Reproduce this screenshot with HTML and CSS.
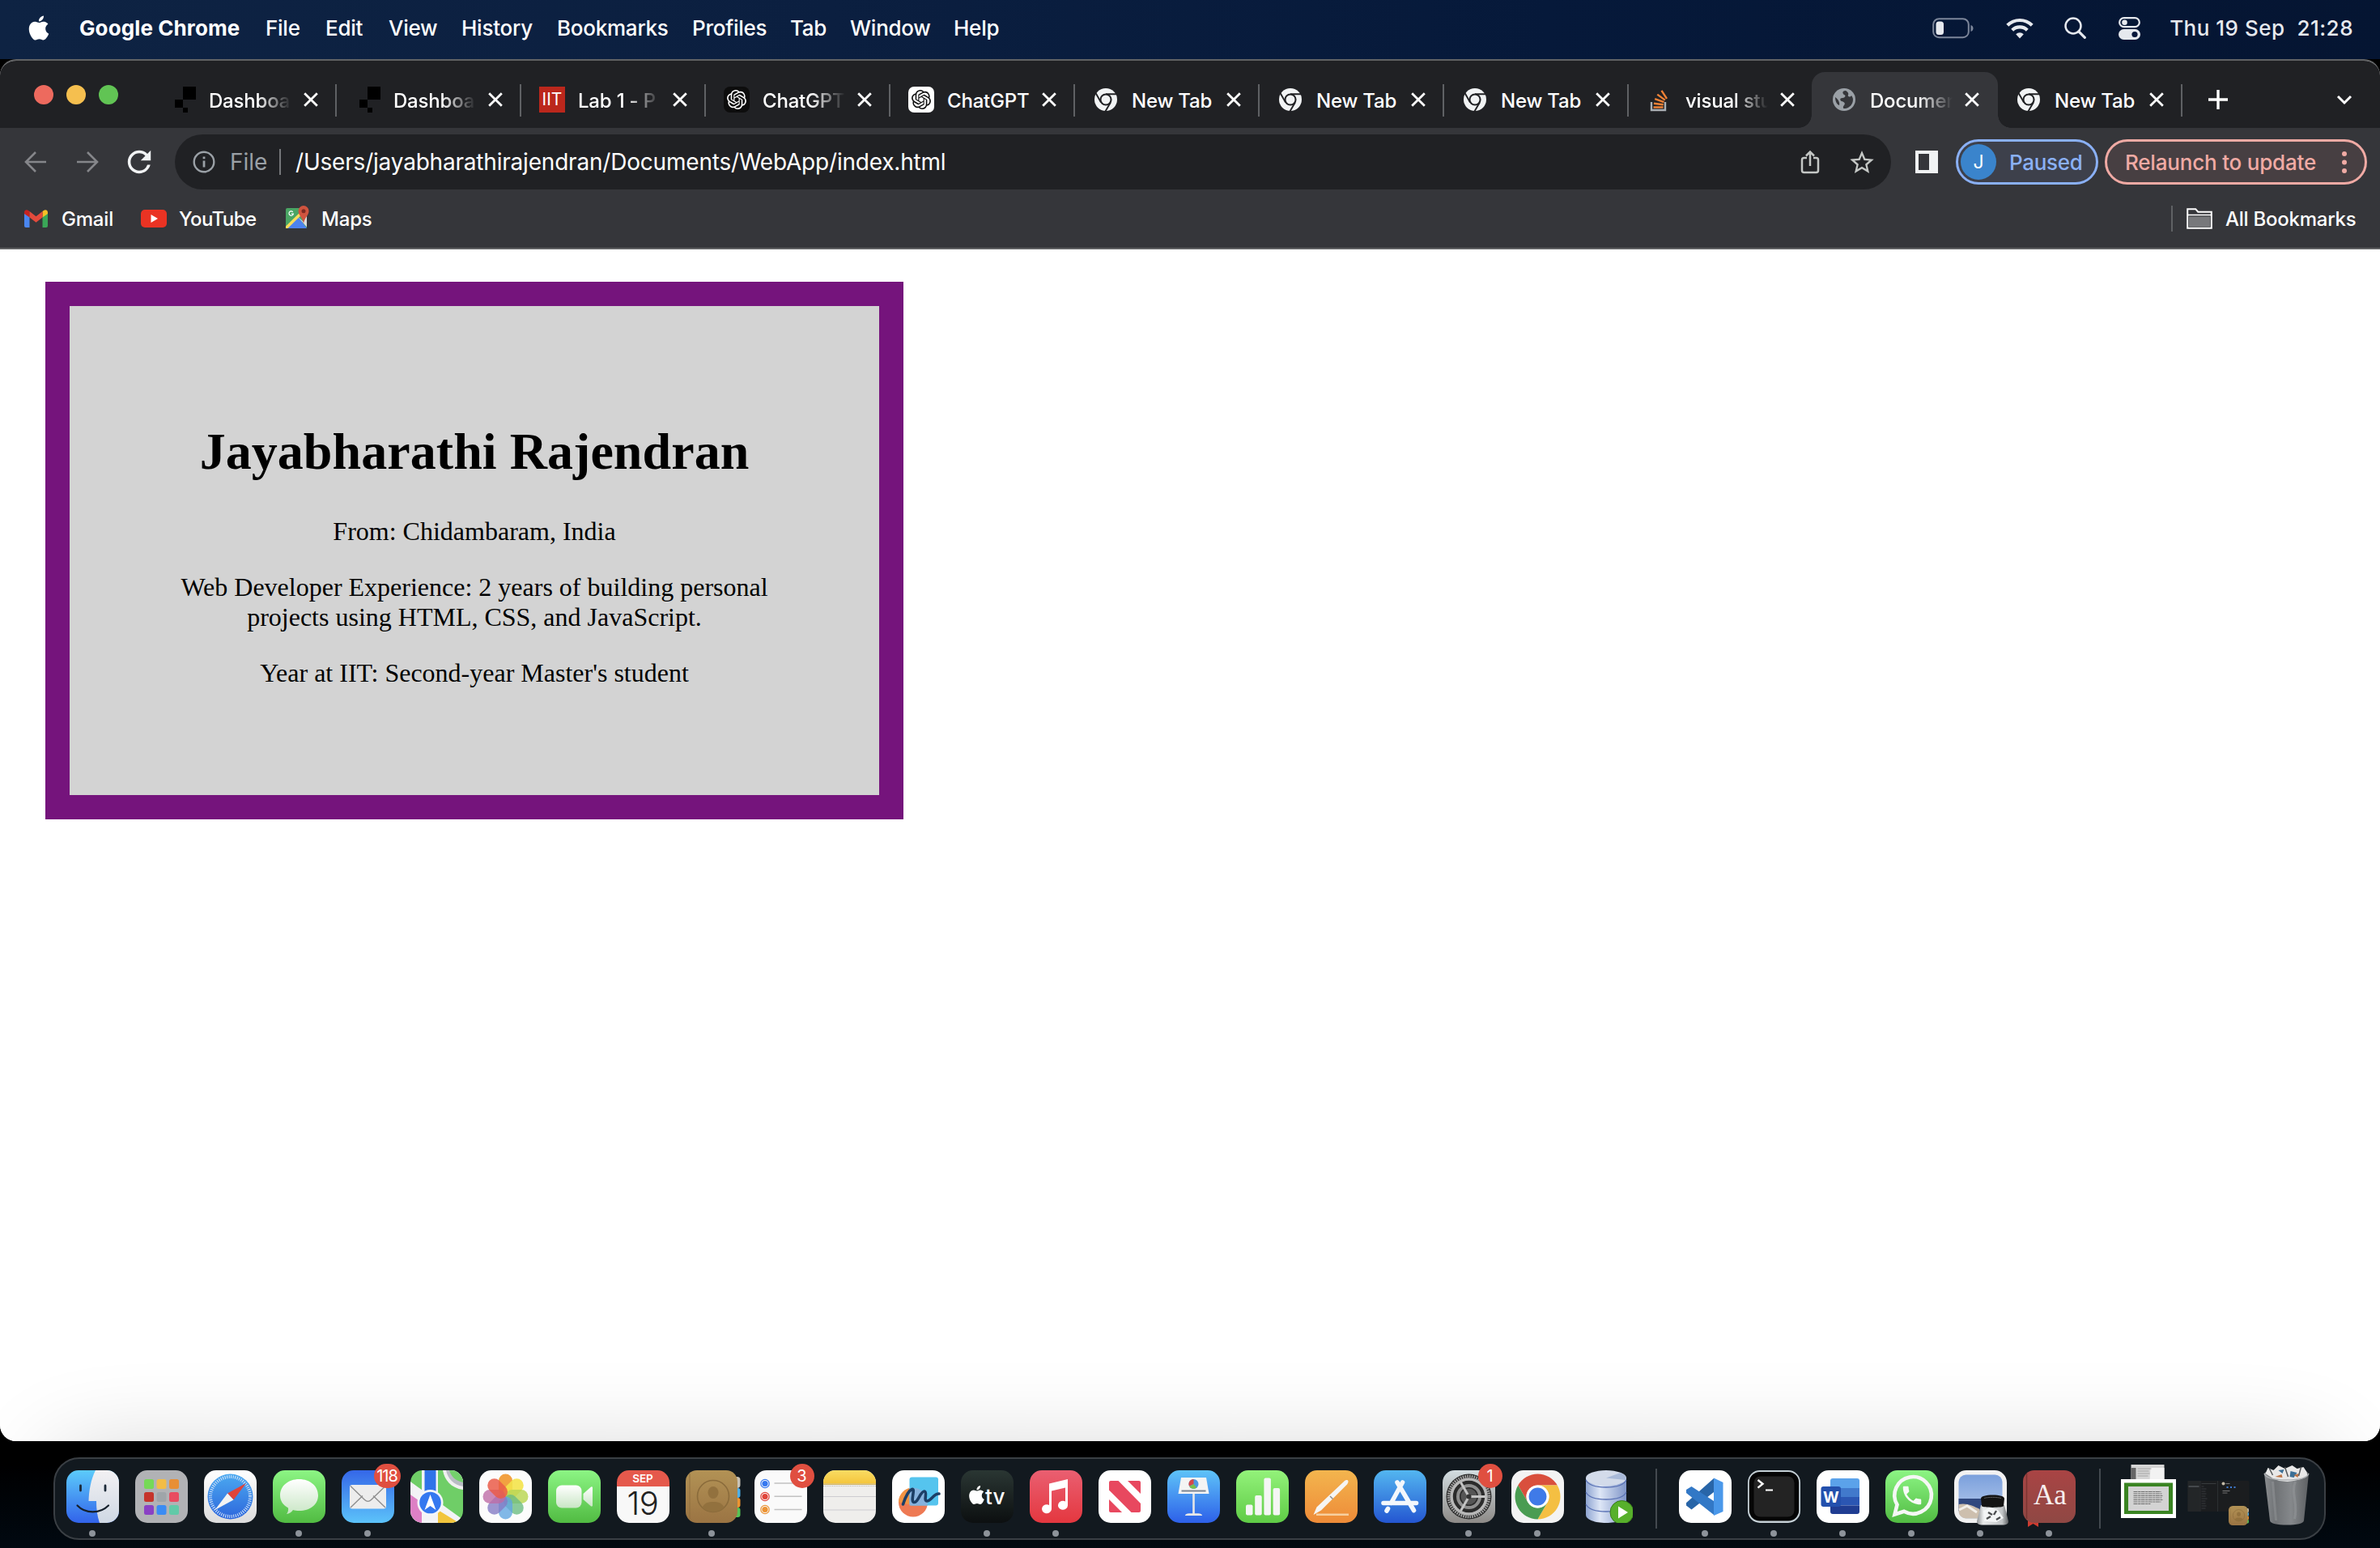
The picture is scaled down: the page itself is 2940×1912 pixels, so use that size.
FILE: index.html
```html
<!DOCTYPE html>
<html lang="en">
<head>
<meta charset="utf-8">
<title>Document</title>
<link rel="stylesheet" href="styles.css">
</head>
<body>
<svg class="defs" width="0" height="0" aria-hidden="true">
  <defs>
    <linearGradient id="g-finder" x1="0" y1="0" x2="0" y2="1"><stop offset="0" stop-color="#5ccbfb"/><stop offset="1" stop-color="#3263ea"/></linearGradient>
    <linearGradient id="g-face" x1="0" y1="0" x2="0" y2="1"><stop offset="0" stop-color="#f2f1f3"/><stop offset="1" stop-color="#cfd8e4"/></linearGradient>
    <linearGradient id="g-green" x1="0" y1="0" x2="0" y2="1"><stop offset="0" stop-color="#8cf584"/><stop offset="1" stop-color="#51bb42"/></linearGradient>
    <linearGradient id="g-bubble" x1="0" y1="0" x2="0" y2="1"><stop offset="0" stop-color="#ffffff"/><stop offset="1" stop-color="#c9e6c5"/></linearGradient>
    <linearGradient id="g-mail" x1="0" y1="0" x2="0" y2="1"><stop offset="0" stop-color="#3567e8"/><stop offset="1" stop-color="#5cc3fa"/></linearGradient>
    <linearGradient id="g-white" x1="0" y1="0" x2="0" y2="1"><stop offset="0" stop-color="#ffffff"/><stop offset="1" stop-color="#dcdcdc"/></linearGradient>
    <linearGradient id="g-safari" x1="0" y1="0" x2="0" y2="1"><stop offset="0" stop-color="#4ba9f0"/><stop offset="1" stop-color="#2d66dc"/></linearGradient>
    <linearGradient id="g-contacts" x1="0" y1="0" x2="0" y2="1"><stop offset="0" stop-color="#b29255"/><stop offset="1" stop-color="#9b7443"/></linearGradient>
    <linearGradient id="g-notes" x1="0" y1="0" x2="0" y2="1"><stop offset="0" stop-color="#f9dc63"/><stop offset="1" stop-color="#f4c53c"/></linearGradient>
    <linearGradient id="g-tv" x1="0" y1="0" x2="0" y2="1"><stop offset="0" stop-color="#2a3633"/><stop offset="1" stop-color="#0c0f10"/></linearGradient>
    <linearGradient id="g-music" x1="0" y1="0" x2="0" y2="1"><stop offset="0" stop-color="#ea5f71"/><stop offset="1" stop-color="#e4373f"/></linearGradient>
    <linearGradient id="g-keynote" x1="0" y1="0" x2="0" y2="1"><stop offset="0" stop-color="#5ec3f8"/><stop offset="1" stop-color="#2d60e9"/></linearGradient>
    <linearGradient id="g-numbers" x1="0" y1="0" x2="0" y2="1"><stop offset="0" stop-color="#93f27a"/><stop offset="1" stop-color="#5fcb46"/></linearGradient>
    <linearGradient id="g-pages" x1="0" y1="0" x2="0" y2="1"><stop offset="0" stop-color="#f3b54e"/><stop offset="1" stop-color="#ee8b38"/></linearGradient>
    <linearGradient id="g-store" x1="0" y1="0" x2="0" y2="1"><stop offset="0" stop-color="#53b6f0"/><stop offset="1" stop-color="#2456d1"/></linearGradient>
    <linearGradient id="g-settings" x1="0" y1="0" x2="0" y2="1"><stop offset="0" stop-color="#d3dde1"/><stop offset="1" stop-color="#8d8a87"/></linearGradient>
    <linearGradient id="g-db" x1="0" y1="0" x2="1" y2="0"><stop offset="0" stop-color="#8fa5d2"/><stop offset=".35" stop-color="#dde6f6"/><stop offset="1" stop-color="#7f95c8"/></linearGradient>
    <linearGradient id="g-dict" x1="0" y1="0" x2="0" y2="1"><stop offset="0" stop-color="#a94444"/><stop offset="1" stop-color="#8f4844"/></linearGradient>
    <linearGradient id="g-sky" x1="0" y1="0" x2="0" y2="1"><stop offset="0" stop-color="#7ba0dc"/><stop offset="1" stop-color="#b9cdee"/></linearGradient>
    <linearGradient id="g-jar" x1="0" y1="0" x2="1" y2="0"><stop offset="0" stop-color="#8f9294"/><stop offset=".2" stop-color="#e8eaeb"/><stop offset=".8" stop-color="#c3c6c8"/><stop offset="1" stop-color="#5e6163"/></linearGradient>
    <linearGradient id="g-trash" x1="0" y1="0" x2="1" y2="0"><stop offset="0" stop-color="#8b8e91"/><stop offset=".25" stop-color="#6f7275"/><stop offset=".6" stop-color="#85888b"/><stop offset="1" stop-color="#5d6063"/></linearGradient>
    <clipPath id="c-app"><rect width="65" height="65" rx="15"/></clipPath>
    <symbol id="apple" viewBox="0 0 24 24"><path d="M12.152 6.896c-.948 0-2.415-1.078-3.96-1.04-2.04.027-3.91 1.183-4.961 3.014-2.117 3.675-.546 9.103 1.519 12.09 1.013 1.454 2.208 3.09 3.792 3.039 1.52-.065 2.09-.987 3.935-.987 1.831 0 2.35.987 3.96.948 1.637-.026 2.676-1.48 3.676-2.948 1.156-1.688 1.636-3.325 1.662-3.415-.039-.013-3.182-1.221-3.22-4.857-.026-3.04 2.48-4.494 2.597-4.559-1.429-2.09-3.623-2.324-4.39-2.376-2-.156-3.675 1.09-4.61 1.09zM15.53 3.83c.843-1.012 1.4-2.427 1.245-3.83-1.207.052-2.662.805-3.532 1.818-.78.896-1.454 2.338-1.273 3.714 1.338.104 2.715-.688 3.559-1.701"/></symbol>
    <symbol id="close" viewBox="0 0 24 24"><path d="M4.200 4.200l15.600 15.600M19.800 4.200L4.200 19.800" stroke="#fff" stroke-width="2.800" fill="none"/></symbol>
    <symbol id="chrome-mono" viewBox="-16 -16 32 32"><circle r="14" fill="#f1f3f4"/><g stroke="#202124" stroke-width="1.900"><path d="M0-6.800H14"/><path d="M0-6.800H14" transform="rotate(120)"/><path d="M0-6.800H14" transform="rotate(240)"/></g><circle r="7.600" fill="#202124"/><circle r="5.500" fill="#f1f3f4"/></symbol>
    <symbol id="dash" viewBox="0 0 32 32"><path d="M16 0h16v16H16zM6 16h10v10H6zM16 26h6v6h-6z"/></symbol>
    <symbol id="gpt" viewBox="0 0 24 24"><path d="M22.2819 9.8211a5.9847 5.9847 0 0 0-.5157-4.9108 6.0462 6.0462 0 0 0-6.5098-2.9A6.0651 6.0651 0 0 0 4.9807 4.1818a5.9847 5.9847 0 0 0-3.9977 2.9 6.0462 6.0462 0 0 0 .7427 7.0966 5.98 5.98 0 0 0 .511 4.9107 6.051 6.051 0 0 0 6.5146 2.9001A5.9847 5.9847 0 0 0 13.2599 24a6.0557 6.0557 0 0 0 5.7718-4.2058 5.9894 5.9894 0 0 0 3.9977-2.9001 6.0557 6.0557 0 0 0-.7475-7.0729zm-9.022 12.6081a4.4755 4.4755 0 0 1-2.8764-1.0408l.1419-.0804 4.7783-2.7582a.7948.7948 0 0 0 .3927-.6813v-6.7369l2.02 1.1686a.071.071 0 0 1 .038.052v5.5826a4.504 4.504 0 0 1-4.4945 4.4944zm-9.6607-4.1254a4.4708 4.4708 0 0 1-.5346-3.0137l.142.0852 4.783 2.7582a.7712.7712 0 0 0 .7806 0l5.8428-3.3685v2.3324a.0804.0804 0 0 1-.0332.0615L9.74 19.9502a4.4992 4.4992 0 0 1-6.1408-1.6464zM2.3408 7.8956a4.485 4.485 0 0 1 2.3655-1.9728V11.6a.7664.7664 0 0 0 .3879.6765l5.8144 3.3543-2.0201 1.1685a.0757.0757 0 0 1-.071 0l-4.8303-2.7865A4.504 4.504 0 0 1 2.3408 7.872zm16.5963 3.8558L13.1038 8.364 15.1192 7.2a.0757.0757 0 0 1 .071 0l4.8303 2.7913a4.4944 4.4944 0 0 1-.6765 8.1042v-5.6772a.79.79 0 0 0-.407-.667zm2.0107-3.0231l-.142-.0852-4.7735-2.7818a.7759.7759 0 0 0-.7854 0L9.409 9.2297V6.8974a.0662.0662 0 0 1 .0284-.0615l4.8303-2.7866a4.4992 4.4992 0 0 1 6.6802 4.66zM8.3065 12.863l-2.02-1.1638a.0804.0804 0 0 1-.038-.0567V6.0742a4.4992 4.4992 0 0 1 7.3757-3.4537l-.142.0805L8.704 5.459a.7948.7948 0 0 0-.3927.6813zm1.0976-2.3654l2.602-1.4998 2.6069 1.4998v2.9994l-2.5974 1.4997-2.6067-1.4997Z"/></symbol>
    <symbol id="contacts" viewBox="0 0 68 65">
      <rect x="50" y="8" width="17.500" height="14" rx="4" fill="#c9c3b6"/><rect x="50" y="22" width="17.500" height="12" rx="3" fill="#4fb0e8"/><rect x="50" y="34" width="17.500" height="12" rx="3" fill="#ee9430"/><rect x="50" y="46" width="17.500" height="12" rx="3" fill="#57c455"/>
      <rect width="64" height="65" rx="14" fill="url(#g-contacts)"/>
      <path d="M5 4v57" stroke="#8d6d3c" stroke-width="1.500" opacity=".6"/>
      <circle cx="34" cy="32" r="19.500" fill="none" stroke="#8a6b3b" stroke-width="1.600"/>
      <ellipse cx="34" cy="27.500" rx="6.500" ry="7.500" fill="#92713e"/><path d="M20.500 46C23 40 28 39 34 39s11 1 13.500 7A19.500 19.500 0 0 1 20.500 46z" fill="#92713e"/>
    </symbol>
  </defs>
</svg>

<header class="menubar">
  <svg class="menubar-apple" fill="#fff"><use href="#apple"/></svg>
  <nav class="menus">
    <b>Google Chrome</b><span>File</span><span>Edit</span><span>View</span><span>History</span><span>Bookmarks</span><span>Profiles</span><span>Tab</span><span>Window</span><span>Help</span>
  </nav>
  <div class="status">
    <svg class="battery" width="51" height="26" viewBox="0 0 51 26"><rect x="1.200" y="1.200" width="43.600" height="23" rx="7" fill="none" stroke="#7c869a" stroke-width="2"/><rect x="4.500" y="4.500" width="9.500" height="16.500" rx="3.500" fill="#e6e9ee"/><path d="M47.500 9v8c2.500-1 3-2.500 3-4s-.5-3-3-4z" fill="#7c869a"/></svg>
    <svg width="34" height="26" viewBox="0 0 34 26" fill="none" stroke="#e6e9ee" stroke-width="4.200"><path d="M1.800 9.300a21.500 21.500 0 0 1 30.400 0"/><path d="M7.700 15.300a13.200 13.200 0 0 1 18.600 0"/><path d="M17 25.500l-4.800-5.300a7 7 0 0 1 9.600 0z" fill="#e6e9ee" stroke="none"/></svg>
    <svg width="27" height="27" viewBox="0 0 27 27" fill="none" stroke="#e6e9ee"><circle cx="11" cy="11" r="9.500" stroke-width="2.500"/><path d="M17.800 17.800l7.500 7.500" stroke-width="3.200" stroke-linecap="round"/></svg>
    <svg class="control" width="27" height="28" viewBox="0 0 27 28"><rect x="1.200" y="1.200" width="24.600" height="11" rx="5.500" fill="none" stroke="#e6e9ee" stroke-width="2.200"/><circle cx="7.500" cy="6.700" r="3.300" fill="#e6e9ee"/><rect y="15" width="27" height="13" rx="6.500" fill="#e6e9ee"/><circle cx="20" cy="21.500" r="3.600" fill="#06163a"/></svg>
    <span class="clock">Thu 19 Sep&nbsp; 21:28</span>
  </div>
</header>

<main class="window">
  <div class="tabstrip">
    <div class="lights"><i class="red"></i><i class="yellow"></i><i class="green"></i></div>
    <div class="tab first"><svg class="fav"><use href="#dash"/></svg><span class="title">Dashboa</span><svg class="x"><use href="#close"/></svg></div>
    <div class="tab"><svg class="fav"><use href="#dash"/></svg><span class="title">Dashboa</span><svg class="x"><use href="#close"/></svg></div>
    <div class="tab"><span class="fav iit">IIT</span><span class="title">Lab 1 - P</span><svg class="x"><use href="#close"/></svg></div>
    <div class="tab"><svg class="fav" viewBox="0 0 32 32"><rect width="32" height="32" rx="8" fill="#0d0d0d"/><use href="#gpt" x="4" y="4" width="24" height="24" fill="#fff"/></svg><span class="title">ChatGPT</span><svg class="x"><use href="#close"/></svg></div>
    <div class="tab"><svg class="fav" viewBox="0 0 32 32"><rect width="32" height="32" rx="7" fill="#fff"/><use href="#gpt" x="4" y="4" width="24" height="24" fill="#111"/></svg><span class="title whole">ChatGPT</span><svg class="x"><use href="#close"/></svg></div>
    <div class="tab"><svg class="fav"><use href="#chrome-mono"/></svg><span class="title whole">New Tab</span><svg class="x"><use href="#close"/></svg></div>
    <div class="tab"><svg class="fav"><use href="#chrome-mono"/></svg><span class="title whole">New Tab</span><svg class="x"><use href="#close"/></svg></div>
    <div class="tab"><svg class="fav"><use href="#chrome-mono"/></svg><span class="title whole">New Tab</span><svg class="x"><use href="#close"/></svg></div>
    <div class="tab"><svg class="fav" viewBox="0 0 32 32"><path d="M6 19v10h17v-10" fill="none" stroke="#aab0b5" stroke-width="2.400"/><g stroke="#ef8236" stroke-width="2.400"><path d="M8.500 25.500h12"/><path d="M8.900 20.700l11.800 1.600"/><path d="M10.200 15.200l11.300 4"/><path d="M13.300 9.600l9.500 7"/><path d="M18.500 4.800l6.500 10"/></g></svg><span class="title">visual stu</span><svg class="x"><use href="#close"/></svg></div>
    <div class="tab active"><svg class="fav" viewBox="-16 -16 32 32"><circle r="14" fill="#9aa0a6"/><path d="M2-11c-5 0-4 4-2 5 3 1 1 4-2 4-4 0-3 3-1 4 3 1 5 2 3 5-2 2-1 4 0 4 5 0 11-4 11-11 0-2-1-4-2-5-2 3-5 1-4-1 1-2-1-4-3-5zM-11-3c0 5 2 9 5 10 1-4-2-8-5-10z" fill="#35363a"/></svg><span class="title">Documen</span><svg class="x"><use href="#close"/></svg></div>
    <div class="tab first"><svg class="fav"><use href="#chrome-mono"/></svg><span class="title whole">New Tab</span><svg class="x"><use href="#close"/></svg></div>
    <div class="newtab"><svg width="24" height="24" viewBox="0 0 24 24"><path d="M12 0v24M0 12h24" stroke="#fff" stroke-width="3.400"/></svg></div>
    <svg class="chevron" width="20" height="14" viewBox="0 0 20 14"><path d="M2 2l8 8 8-8" fill="none" stroke="#fff" stroke-width="3"/></svg>
  </div>

  <div class="toolbar">
    <svg class="nav-btn" viewBox="0 0 28 28" fill="none" stroke="#85868a" stroke-width="2.600"><path d="M27 14H2M14 2L2 14l12 12"/></svg>
    <svg class="nav-btn" viewBox="0 0 28 28" fill="none" stroke="#85868a" stroke-width="2.600"><path d="M1 14h25M14 2l12 12-12 12"/></svg>
    <svg class="reload" viewBox="3 3 18 18" fill="#f1f3f4"><path d="M17.650 6.350A7.958 7.958 0 0 0 12 4c-4.420 0-7.990 3.580-7.990 8s3.570 8 7.990 8c3.730 0 6.840-2.550 7.730-6h-2.080A5.990 5.990 0 0 1 12 18c-3.310 0-6-2.690-6-6s2.690-6 6-6c1.660 0 3.140.690 4.220 1.780L13 11h7V4l-2.350 2.350z"/></svg>
    <div class="omnibox">
      <svg class="info" viewBox="0 0 28 28"><circle cx="14" cy="14" r="12.300" fill="none" stroke="#9aa0a6" stroke-width="2.400"/><path d="M14 12.500v8M14 7.500v2.800" stroke="#9aa0a6" stroke-width="2.800"/></svg>
      <span class="scheme">File</span>
      <i class="omni-sep"></i>
      <span class="url">/Users/jayabharathirajendran/Documents/WebApp/index.html</span>
      <svg class="share" viewBox="0 0 24 30" fill="none" stroke="#c4c7c5" stroke-width="2.500"><path d="M8 10H4.500a2.500 2.500 0 0 0-2.500 2.500v13A2.500 2.500 0 0 0 4.500 28h15a2.500 2.500 0 0 0 2.500-2.500v-13a2.500 2.500 0 0 0-2.500-2.500H16M12 20V3M7 7.500l5-5 5 5"/></svg>
      <svg class="star" viewBox="2 2 20 19" fill="#c4c7c5"><path d="M22 9.240l-7.190-.620L12 2 9.190 8.630 2 9.240l5.460 4.730L5.820 21 12 17.270 18.180 21l-1.630-7.030L22 9.240zM12 15.400l-3.760 2.270 1-4.280-3.320-2.880 4.380-.380L12 6.100l1.710 4.040 4.380.380-3.320 2.880 1 4.280L12 15.400z"/></svg>
    </div>
    <svg class="panel" viewBox="0 0 28 28"><path d="M0 0h28v28H0zM4 4v20h13V4z" fill="#f1f3f4" fill-rule="evenodd"/></svg>
    <div class="pill paused"><span class="avatar">J</span><span>Paused</span></div>
    <div class="pill relaunch"><span>Relaunch to update</span><svg width="6" height="27" viewBox="0 0 6 27" fill="#f0aaa4"><circle cx="3" cy="3" r="3"/><circle cx="3" cy="13.500" r="3"/><circle cx="3" cy="24" r="3"/></svg></div>
  </div>

  <div class="bookmarks">
    <svg class="gmail" viewBox="0 0 29 22"><path d="M0 3v17a2 2 0 0 0 2 2h4.500V8z" fill="#4a86ef"/><path d="M29 3v17a2 2 0 0 1-2 2h-4.500V8z" fill="#3aa757"/><path d="M22.500 9.500V2l1.500-1c2-1.500 5-.5 5 2.500v1.500z" fill="#f6bf26"/><path d="M6.500 9.500V2L5 1C3-.5 0 .5 0 3.500V5z" fill="#c5221f"/><path d="M6.500 2l8 6.200 8-6.200v7.500l-8 6.200-8-6.200z" fill="#e34a3c"/></svg>
    <span class="bm-gmail">Gmail</span>
    <svg class="youtube" viewBox="0 0 32 22"><rect width="32" height="22" rx="5" fill="#ea3323"/><path d="M12.500 6l8.500 5-8.500 5z" fill="#fff"/></svg>
    <span class="bm-youtube">YouTube</span>
    <svg class="maps" viewBox="0 0 29 28"><rect y="3" width="26" height="25" rx="2" fill="#4aa564"/><path d="M0 28L15 13l11 15z" fill="#4d83ee"/><path d="M0 25.500V28h2.500L26 5V3h-3z" fill="#fbdc5b"/><path d="M15 14l11 12.500V10l-4 10z" fill="#dcdcdc"/><path d="M22 0a6.500 6.500 0 0 1 6.500 6.500C28.500 12 23 15 22 22c-1-7-6.500-10-6.500-15.500A6.500 6.500 0 0 1 22 0z" fill="#d0543f"/><circle cx="22" cy="6.700" r="2.500" fill="#7d2a22"/><path d="M8.800 7.800a2.700 2.700 0 1 0 .6 2.300H6.800" stroke="#fff" stroke-width="1.200" fill="none"/></svg>
    <span>Maps</span>
    <i class="bm-sep"></i>
    <svg class="folder" viewBox="0 0 32 26"><path d="M1.200 24.800V1.200h10l3 3.500h16.600v20.100z" fill="#35363a" stroke="#fff" stroke-width="2"/><path d="M1.200 8.500h29.600" stroke="#fff" stroke-width="1.600"/><path d="M3 10.500h26v12.500H3z" fill="#77787b"/></svg>
    <span class="bm-all">All Bookmarks</span>
  </div>

  <div class="page">
    <section class="card">
      <h1>Jayabharathi Rajendran</h1>
      <p>From: Chidambaram, India</p>
      <p>Web Developer Experience: 2 years of building personal projects using HTML, CSS, and JavaScript.</p>
      <p>Year at IIT: Second-year Master's student</p>
    </section>
  </div>
</main>

<footer class="dock">
  <div class="app on"><svg viewBox="0 0 65 65"><g clip-path="url(#c-app)"><rect width="65" height="65" fill="url(#g-finder)"/><path d="M36 0C30 12 28 25 27.500 38h9.500c0 10 1 18 4 27h24V0z" fill="url(#g-face)"/><path d="M17.500 19v6M48 19v6" stroke="#1c2a38" stroke-width="2.800" stroke-linecap="round"/><path d="M13.500 43.500c10 10.500 28 10.500 38.500 0" fill="none" stroke="#16202c" stroke-width="2.200" stroke-linecap="round"/></g></svg></div>
  <div class="app"><svg viewBox="0 0 65 65"><rect width="65" height="65" rx="15" fill="#b1b2b5"/><g><rect x="11" y="11" width="12" height="12" rx="2.500" fill="#76d957"/><rect x="26.500" y="11" width="12" height="12" rx="2.500" fill="#f3bd46"/><rect x="42" y="11" width="12" height="12" rx="2.500" fill="#e88f35"/><rect x="11" y="27" width="12" height="12" rx="2.500" fill="#c5342a"/><rect x="26.500" y="27" width="12" height="12" rx="2.500" fill="#9fa5a9"/><rect x="42" y="27" width="12" height="12" rx="2.500" fill="#e84c60"/><rect x="11" y="43" width="12" height="12" rx="2.500" fill="#8a41c4"/><rect x="26.500" y="43" width="12" height="12" rx="2.500" fill="#3b8cf3"/><rect x="42" y="43" width="12" height="12" rx="2.500" fill="#62c9a8"/></g></svg></div>
  <div class="app"><svg viewBox="0 0 65 65"><rect width="65" height="65" rx="15" fill="url(#g-white)"/><circle cx="32.500" cy="32.500" r="28" fill="url(#g-safari)"/><circle cx="32.500" cy="32.500" r="24.500" fill="none" stroke="#d6e7fa" stroke-width="4" stroke-dasharray="1 1.565"/><path d="M52 16L36.500 36.500l-7.500-8z" fill="#e0443a"/><path d="M13.500 49L29 28.500l7.500 8z" fill="#f3f3f3"/></svg></div>
  <div class="app on"><svg viewBox="0 0 65 65"><rect width="65" height="65" rx="15" fill="url(#g-green)"/><path d="M32.500 11C46 11 56 19.500 56 31S46 50 32.500 50c-3 0-5-.3-7.500-1-2 3-5 4.500-8 5 1.500-2 2.500-4.500 2-7.500C12.500 43 9 37.500 9 31c0-11.500 10-20 23.500-20z" fill="url(#g-bubble)"/></svg></div>
  <div class="app on"><svg viewBox="0 0 65 65"><rect width="65" height="65" rx="15" fill="url(#g-mail)"/><rect x="10" y="18" width="45" height="29.500" rx="3" fill="#ededed"/><path d="M11 46l15-14.500M54 46L39 31.500M11 19.500l17.500 17c2.500 2.500 5.500 2.500 8 0L54 19.500" fill="none" stroke="#8e8e8e" stroke-width="1.400"/></svg><span class="badge wide">118</span></div>
  <div class="app"><svg viewBox="0 0 65 65"><g clip-path="url(#c-app)"><rect width="65" height="65" fill="#6fce67"/><path d="M0 14l65 47v4H0z" fill="#f3f3f6"/><path d="M0 30l14 10v25H0z" fill="#dd80c5"/><path d="M34 49l26 16H34z" fill="#f2c53d"/><path d="M40 0h25v24C50 22 42 12 40 0z" fill="#f0f0f0"/><path d="M44 0h21v20C53 18 46 10 44 0z" fill="#b9bcc4"/><path d="M48 0h17v15C55 13 50 7 48 0z" fill="#74d06c"/><path d="M14 0h20v65H14z" fill="#f3f3f6"/><path d="M17.500 0h14v40h-14z" fill="#2f73e8"/><circle cx="24.500" cy="40" r="16" fill="#f5f6f8"/><circle cx="24.500" cy="40" r="13.300" fill="#3478f0"/><path d="M24.500 30l7 19-7-5-7 5z" fill="#fff"/></g></svg></div>
  <div class="app"><svg viewBox="0 0 65 65"><rect width="65" height="65" rx="15" fill="#fcfcfc"/><g transform="translate(32.500 32.500)" opacity=".92"><rect x="-8.500" y="-28" width="17" height="28" rx="8.500" fill="#f29a32"/><rect x="-8.500" y="-28" width="17" height="28" rx="8.500" fill="#f3e13c" fill-opacity=".9" transform="rotate(45)"/><rect x="-8.500" y="-28" width="17" height="28" rx="8.500" fill="#b5d349" fill-opacity=".85" transform="rotate(90)"/><rect x="-8.500" y="-28" width="17" height="28" rx="8.500" fill="#62b878" fill-opacity=".8" transform="rotate(135)"/><rect x="-8.500" y="-28" width="17" height="28" rx="8.500" fill="#559fdf" fill-opacity=".8" transform="rotate(180)"/><rect x="-8.500" y="-28" width="17" height="28" rx="8.500" fill="#7b72c0" fill-opacity=".8" transform="rotate(225)"/><rect x="-8.500" y="-28" width="17" height="28" rx="8.500" fill="#b9609f" fill-opacity=".8" transform="rotate(270)"/><rect x="-8.500" y="-28" width="17" height="28" rx="8.500" fill="#e94f3a" fill-opacity=".85" transform="rotate(315)"/></g></svg></div>
  <div class="app"><svg viewBox="0 0 65 65"><rect width="65" height="65" rx="15" fill="url(#g-green)"/><rect x="10" y="18.500" width="31.500" height="28" rx="7" fill="url(#g-bubble)"/><path d="M43.500 29l9-8c1.500-1.300 2.500-.5 2.500 1v21c0 1.500-1 2.300-2.500 1l-9-8z" fill="url(#g-bubble)"/></svg></div>
  <div class="app cal"><span class="month">SEP</span><span class="day">19</span></div>
  <div class="app on"><svg class="contacts-icon" viewBox="0 0 68 65"><use href="#contacts" width="68" height="65"/></svg></div>
  <div class="app"><svg viewBox="0 0 65 65"><rect width="65" height="65" rx="15" fill="#fafafa"/><path d="M24.500 16h34M24.500 32.300h34M24.500 48.500h34" stroke="#c2c2c2" stroke-width="1.600"/><g fill="none" stroke-width="1.200"><circle cx="13" cy="16.500" r="5.200" stroke="#3478f0"/><circle cx="13" cy="32.500" r="5.200" stroke="#e0443a"/><circle cx="13" cy="48.500" r="5.200" stroke="#ec9333"/></g><circle cx="13" cy="16.500" r="3.600" fill="#3478f0"/><circle cx="13" cy="32.500" r="3.600" fill="#e0443a"/><circle cx="13" cy="48.500" r="3.600" fill="#ec9333"/></svg><span class="badge">3</span></div>
  <div class="app"><svg viewBox="0 0 65 65"><g clip-path="url(#c-app)"><rect width="65" height="65" fill="#efeeec"/><rect width="65" height="16.500" fill="url(#g-notes)"/><path d="M0 17.200h65" stroke="#c49c2a"/><path d="M0 19.500h65" stroke="#b8b6b0" stroke-width="1.200" stroke-dasharray="1 1.200"/><path d="M0 32.500h65M0 49h65" stroke="#cdccd0" stroke-width="1.200"/></g></svg></div>
  <div class="app"><svg viewBox="0 0 65 65"><rect width="65" height="65" rx="15" fill="#fff"/><circle cx="26" cy="39.500" r="18" fill="#ee7a54"/><path d="M8 39.500a18 18 0 0 1 13.500-17.400L30 44z" fill="#f3a03c" opacity=".7"/><rect x="21.500" y="8.500" width="35.500" height="35" rx="3" fill="#55c4ee"/><path d="M21.500 22.200a18 18 0 0 1 22 21.300h-22z" fill="#86b2dd"/><path d="M13.500 42c3-9 7-17 11-18.500 5-1.500-2.500 15 2.500 16 5 .8 8-14 13-13.500 4 .5-1.500 12 3 12 5 0 8.500-9.500 15-9" fill="none" stroke="#1c3f66" stroke-width="3.600" stroke-linecap="round"/></svg></div>
  <div class="app on"><svg viewBox="0 0 65 65"><rect width="65" height="65" rx="15" fill="url(#g-tv)"/><use href="#apple" x="8" y="19" width="23" height="23" fill="#fff"/><text x="30" y="42" class="tv-label">tv</text></svg></div>
  <div class="app on"><svg viewBox="0 0 65 65"><rect width="65" height="65" rx="15" fill="url(#g-music)"/><path d="M24 16.500L47 11v32.500a6 5.500 0 1 1-3-5V21.500l-17 4V48a6 5.500 0 1 1-3-5z" fill="#fff"/></svg></div>
  <div class="app"><svg viewBox="0 0 65 65"><rect width="65" height="65" rx="15" fill="#fff"/><path d="M15 13h9.500L52 41v9a2 2 0 0 1-2 2h-9.500L13 24.500V15a2 2 0 0 1 2-2zM36 13h14a2 2 0 0 1 2 2v14zM13 36l16 16H15a2 2 0 0 1-2-2z" fill="#e8485f"/></svg></div>
  <div class="app"><svg viewBox="0 0 65 65"><rect width="65" height="65" rx="15" fill="url(#g-keynote)"/><path d="M17 9h31l3.500 20H13.500z" fill="#f4f4f4"/><path d="M17.500 25.500h30" stroke="#7b8591" stroke-width="2"/><circle cx="32.500" cy="17" r="6" fill="#4f97e0"/><path d="M32.500 17v-6a6 6 0 0 0-5.500 8.500z" fill="#d64949"/><path d="M32.500 17l-5.300 2.900a6 6 0 0 0 9 1.500z" fill="#7cc04b"/><path d="M32.500 29v25" stroke="#e6e6e6" stroke-width="2.600"/><path d="M22 56c0-2 3-2.800 5-2.800h11c2 0 5 .8 5 2.800z" fill="#e8e8e8"/></svg></div>
  <div class="app"><svg viewBox="0 0 65 65"><rect width="65" height="65" rx="15" fill="url(#g-numbers)"/><g fill="#f4f6f4"><rect x="12" y="42.500" width="8.500" height="13" rx="2"/><rect x="23.200" y="31" width="8.500" height="24.500" rx="2"/><rect x="34.400" y="9.500" width="8.500" height="46" rx="2"/><rect x="45.600" y="22" width="8.500" height="33.500" rx="2"/></g></svg></div>
  <div class="app"><svg viewBox="0 0 65 65"><rect width="65" height="65" rx="15" fill="url(#g-pages)"/><path d="M14 54.700h40" stroke="#f7cf9f" stroke-width="2.600"/><path d="M10.500 55l4-9.500L48 14c2-2 4-2.500 5-1.500s.5 3-1 5L20 49.500z" fill="#f6f5f3"/><path d="M31 32l3.500 3.500" stroke="#8b8b8b" stroke-width="1.400"/></svg></div>
  <div class="app"><svg viewBox="0 0 65 65"><rect width="65" height="65" rx="15" fill="url(#g-store)"/><g stroke="#f3f7fc" stroke-width="5.600" stroke-linecap="round"><path d="M35.500 15L21.500 40.500M29 15l20.500 34.500M12 40.500h40.500M17.500 47.500L16 50"/></g></svg></div>
  <div class="app on"><svg viewBox="0 0 65 65"><rect width="65" height="65" rx="15" fill="url(#g-settings)"/><circle cx="32.500" cy="32.500" r="28" fill="#2b2b2b"/><circle cx="32.500" cy="32.500" r="25" fill="none" stroke="#a5a5a5" stroke-width="3.500" stroke-dasharray="1.600 1.200"/><circle cx="32.500" cy="32.500" r="21.500" fill="none" stroke="#b8b8b8" stroke-width="3.600"/><circle cx="32.500" cy="32.500" r="13.500" fill="none" stroke="#8e8e8e" stroke-width="4"/><circle cx="32.500" cy="32.500" r="10" fill="#555"/><path d="M32.500 32.500H53M32.500 32.500L22.500 15M32.500 32.500L22.500 50" stroke="#c3c3c3" stroke-width="3"/><circle cx="32.500" cy="32.500" r="3" fill="#333"/></svg><span class="badge">1</span></div>
  <div class="app on"><svg viewBox="0 0 65 65"><rect width="65" height="65" rx="15" fill="#f3f3f3"/><g transform="translate(32.500 32.500) scale(1.400)"><path d="M-17.320-10A20 20 0 0 1 17.320-10H0A10 10 0 0 0-8.660 5z" fill="#d94f3d"/><path d="M-17.320-10A20 20 0 0 1 17.320-10H0A10 10 0 0 0-8.660 5z" fill="#f4bf42" transform="rotate(120)"/><path d="M-17.320-10A20 20 0 0 1 17.320-10H0A10 10 0 0 0-8.660 5z" fill="#4a9c52" transform="rotate(240)"/><circle r="10" fill="#fff"/><circle r="7.800" fill="#3f7ae8"/></g></svg></div>
  <div class="app"><svg viewBox="0 0 65 65"><path d="M7 9v46c0 6 11 10 25 10s25-4 25-10V9z" fill="url(#g-db)"/><g fill="none" stroke="#5a72b5" stroke-width="1.300"><path d="M7 12c3 6 12 9 25 9s22-3 25-9M7 27c3 6 12 9 25 9s22-3 25-9M7 42c3 6 12 9 25 9s22-3 25-9"/></g><ellipse cx="32" cy="9.500" rx="25" ry="9.500" fill="#d3dbea"/><path d="M32 9.500L50 3c5 3 8 5 6 9z" fill="#a9bad9"/><circle cx="51.500" cy="52" r="14.500" fill="#57b02b" stroke="#39791c"/><path d="M47 44.500l12 7.500-12 7.500z" fill="#fff"/></svg></div>
  <i class="dock-sep"></i>
  <div class="app on"><svg viewBox="0 0 65 65"><rect width="65" height="65" rx="15" fill="#fff"/><path d="M43 10v17L15.500 48.500 9 43.500v-3.200z" fill="#2865a8"/><path d="M43 55V38L15.500 20 9 24v4z" fill="#3278c6"/><path d="M43 9.500L54.500 15v36L43 56z" fill="#4a98ea"/></svg></div>
  <div class="app on"><svg viewBox="0 0 65 65"><rect width="65" height="65" rx="15" fill="#c5d0d6"/><rect x="1.800" y="2" width="61.400" height="60.500" rx="13" fill="#050505"/><rect x="7.500" y="7.500" width="50" height="50" rx="8" fill="#232323"/><path d="M12.500 12l6 4.800-6 4.800" fill="none" stroke="#fff" stroke-width="2.400"/><path d="M22 24.500h9" stroke="#fff" stroke-width="2"/></svg></div>
  <div class="app on"><svg viewBox="0 0 65 65"><g clip-path="url(#c-app)"><rect width="65" height="65" fill="#fff"/><path d="M17 22V13a3 3 0 0 1 3-3h30a3 3 0 0 1 3 3v9z" fill="#5ba2ea"/><path d="M17 22h36v11H17z" fill="#4179cc"/><path d="M17 33h36v10.500H17z" fill="#2b56b3"/><path d="M17 43.500h36V51a3 3 0 0 1-3 3H20a3 3 0 0 1-3-3z" fill="#203d92"/><rect x="5.500" y="20" width="24.500" height="25" rx="3" fill="#2350ad"/></g><text x="17.800" y="39.500" class="w-label">W</text></svg></div>
  <div class="app on"><svg viewBox="0 0 65 65"><rect width="65" height="65" rx="15" fill="url(#g-green)"/><path d="M11.500 54.500l3-12A22.800 22.800 0 1 1 23 50.800z" fill="none" stroke="#f5f7f5" stroke-width="4.600"/><svg x="18" y="16" width="30" height="30" viewBox="0 0 24 24"><path fill="#f8faf8" d="M6.620 10.790c1.440 2.830 3.760 5.140 6.590 6.590l2.200-2.200c.270-.270.670-.360 1.020-.240 1.120.370 2.330.570 3.570.570.550 0 1 .450 1 1V20c0 .550-.450 1-1 1-9.390 0-17-7.610-17-17 0-.550.450-1 1-1h3.500c.550 0 1 .450 1 1 0 1.250.200 2.450.570 3.570.110.350.030.740-.250 1.020l-2.200 2.200z"/></svg></svg></div>
  <div class="app on"><svg class="tall" viewBox="0 0 65 70"><rect width="65" height="65" rx="15" fill="#f1f1f1"/><rect x="5.500" y="5.500" width="54" height="54" rx="9" fill="url(#g-sky)"/><path d="M5.500 35h54v15h-54z" fill="#31497f"/><path d="M5.500 42c10-2 18 2 26 6v11.500H14.500a9 9 0 0 1-9-9z" fill="#cdbfae"/><path d="M6 49l10-5 12 8" stroke="#f3f0ea" stroke-width="3" fill="none"/><path d="M33 43h29l5 20c0 3.500-3 4.500-7 4.500H35c-4 0-7-1-7-4.500z" fill="url(#g-jar)"/><path d="M36 50l8-4 10 3 7 10-9 5-15-1z" fill="#f3f5f6"/><path d="M42 52l5 3M52 50l-3 5M40 60l5-3M52 61l5-3" stroke="#4b4d4f" stroke-width="2.400"/><path d="M33 35c0-3 6-4.500 14.500-4.500S62 32 62 35l-1 9c0 2.500-27 2.500-27 0z" fill="#131313"/><path d="M37 34.500c5-1.500 16-1.500 21 0" stroke="#555" fill="none"/></svg></div>
  <div class="app on"><svg class="tall" viewBox="0 0 65 70"><path d="M6 60h13v10l-6.500-4L6 70z" fill="#cf3b30"/><rect width="65" height="65" rx="14" fill="url(#g-dict)"/><path d="M4.500 4v56" stroke="#6d2d2b" stroke-width="1.500" opacity=".7"/><text x="33.500" y="42" class="aa-label">Aa</text></svg></div>
  <i class="dock-sep second"></i>
  <svg class="mini" viewBox="0 2 85 98"><path d="M21 9h41v20H21z" fill="#d5d5d5"/><path d="M21 13h6v16h-6z" fill="#666"/><path d="M45 13h17v16H44z" fill="#f2f2f2"/><path d="M29 14h17M29 17h14M29 20h15M29 23h13" stroke="#999" stroke-width=".8"/><rect x="8.500" y="27" width="68" height="48" fill="#fff"/><rect x="12.500" y="31.500" width="60" height="38.500" fill="#3a8422"/><rect x="17.500" y="36" width="50" height="30" fill="#d3d3d3"/><g stroke="#6d6d6d" stroke-width="1.100"><path d="M24 42.500h34M24 45h35M24 47.500h36M24 50h35M24 52.500h36M24 55h34M24 57.500h21" stroke-dasharray="5 .6 3 .5"/></g></svg>
  <svg class="mini" viewBox="0 2 85 98"><rect x="5" y="29" width="76" height="38" rx="1.500" fill="#1b1d1f"/><rect x="5" y="29" width="15" height="38" fill="#232628"/><path d="M20.500 29v38M42 29v38" stroke="#303336" stroke-width=".8"/><path d="M6 36h13" stroke="#45494c" stroke-width="2"/><path d="M22 32.500h18M22 36h3M22 39h6M22 42h5M22 45h6M22 48h5M22 51h7M22 54h5M22 57h5M22 60h6M22 63h5" stroke="#383b3e" stroke-width="1.200"/><circle cx="49" cy="32.500" r="2" fill="#c2b9a5"/><path d="M52 32.500h5M48 41.500h9M48 44h6" stroke="#777" stroke-width="1"/><path d="M53 37h2M57.500 37h2M62 37h2" stroke="#3f7bd0" stroke-width="2"/><use href="#contacts" x="55" y="60" width="26" height="24"/></svg>
  <svg class="mini" viewBox="0 2 85 98"><path d="M13.500 20C16 16 26 15 41 15s25 1 27.500 5l-6 58c-.5 4-9 5.500-21 5.500S21 82 20.500 78z" fill="url(#g-trash)"/><path d="M15 20l3-7 7 3 6-6 8 4 9-4 6 4 8-2 4 6 1 5-8 4-9 2-8 1-10-1-8-3z" fill="#e8e8e8"/><path d="M31 16l7-1-2 5zM46 17l8 2-4 6-5-1z" fill="#3b6f96"/><path d="M27 24l8-3 1 4zM50 22l6-2-1 5z" fill="#bb7345"/><path d="M20 14l4 8M39 12l4 12M59 12l-3 11" stroke="#55585a" stroke-width="1.500"/><path d="M13.500 20c2 6 14 8 27.500 8s25.500-2 27.500-8" fill="none" stroke="#aeb2b5" stroke-width="1.300"/><path d="M24 30l4 48M52 30c-6 14 4 28-1 46" stroke="#a2a5a8" stroke-width="3" opacity=".35" fill="none"/></svg>
</footer>
</body>
</html>
```
FILE: styles.css
```css
* { box-sizing: border-box; }

html, body { height: 100%; }

body {
  margin: 0;
  display: flex;
  flex-direction: column;
  background: linear-gradient(#000 0, #000 1800px, #020a12 1912px);
  font-family: Inter, "Liberation Sans", sans-serif;
  color: #fff;
  overflow: hidden;
}

.defs { position: absolute; }
svg { display: block; flex: none; }
i { display: block; flex: none; }

/* Menu bar */
.menubar {
  height: 73px;
  flex: none;
  display: flex;
  align-items: center;
  padding: 0 34px 4px 33px;
  background: linear-gradient(90deg, #0e2343, #0b1f40 35%, #06193a 65%, #051532);
  font-size: 26px;
  font-weight: 500;
}
.menubar-apple { width: 30px; height: 31px; margin-top: -1px; }
.menus {
  display: grid;
  grid-template-columns: 230px 74px 78px 90px 118px 167px 121px 74px 128px auto;
  margin-left: 35px;
  letter-spacing: -0.25px;
}
.menus b { font-weight: 700; letter-spacing: 0.1px; }
.menus span, .menus b { white-space: nowrap; }
.status { display: flex; align-items: center; gap: 38px; margin-left: auto; color: #e6e9ee; }
.battery { margin-right: 2px; }
.control { margin: 0 -2px 0 2px; }
.clock { white-space: nowrap; letter-spacing: 0.5px; margin-right: -1px; }

/* Browser window */
.window {
  height: 1707px;
  flex: none;
  display: flex;
  flex-direction: column;
  overflow: hidden;
  border-radius: 20px;
  border-top: 2px solid #606264;
  background: #fff;
}
.tabstrip {
  height: 83px;
  flex: none;
  display: flex;
  align-items: center;
  padding-top: 14px;
  background: #202124;
  font-size: 24px;
  font-weight: 500;
}
.lights { width: 186px; flex: none; display: flex; gap: 16px; padding: 0 0 14px 42px; }
.lights i { width: 24px; height: 24px; border-radius: 50%; }
.red { background: #ed6a5e; }
.yellow { background: #f5bf4f; }
.green { background: #61c454; }

.tab {
  width: 228px;
  height: 69px;
  flex: none;
  display: flex;
  align-items: center;
  position: relative;
}
.tab::before {
  content: "";
  width: 2px;
  height: 40px;
  margin-right: 22px;
  background: #5f6164;
}
.tab.first::before, .tab.active::before { background: transparent; }
.fav { width: 32px; height: 32px; flex: none; margin-top: -1px; }
.title {
  width: 106px;
  flex: none;
  margin: 1px 8px 0 16px;
  white-space: nowrap;
  letter-spacing: -0.2px;
  -webkit-mask-image: linear-gradient(90deg, #000 60px, transparent 102px);
  mask-image: linear-gradient(90deg, #000 60px, transparent 102px);
}
.title.whole { -webkit-mask-image: none; mask-image: none; }
.x { width: 24px; height: 24px; margin-top: -1px; }
.iit {
  background: #bb271c;
  font-size: 21px;
  font-weight: 400;
  line-height: 32px;
  text-align: center;
}
.tab.active { width: 230px; margin-right: -2px; background: #35363a; border-radius: 16px 16px 0 0; z-index: 1; }
.tab.active::after {
  content: "";
  position: absolute;
  left: -16px;
  right: -16px;
  bottom: 0;
  height: 16px;
  background:
    radial-gradient(circle at 0 0, transparent 15.5px, #35363a 16px) left / 16px 16px no-repeat,
    radial-gradient(circle at 100% 0, transparent 15.5px, #35363a 16px) right / 16px 16px no-repeat;
}
.newtab { display: flex; align-items: center; height: 40px; padding-left: 32px; border-left: 2px solid #5f6164; }
.newtab svg { margin-top: -1px; }
.chevron { margin: 0 34px 0 auto; }

.toolbar { height: 76px; flex: none; display: flex; align-items: flex-start; padding: 8px 16px 0 30px; background: #35363a; }
.toolbar > svg { margin-top: 20px; }
.nav-btn { width: 28px; height: 28px; margin-right: 36px; }
.toolbar > .reload { width: 32px; height: 32px; margin: 18px 28px 0 -2px; }
.omnibox {
  width: 2120px;
  height: 68px;
  flex: none;
  display: flex;
  align-items: center;
  padding: 0 21px 0 22px;
  border-radius: 34px;
  background: #202124;
  font-size: 28px;
}
.info { width: 28px; height: 28px; }
.scheme { width: 44px; margin-left: 18px; color: #9aa0a6; }
.omni-sep { width: 2px; height: 32px; margin: 0 18px 0 17px; background: #75777a; }
.url { letter-spacing: -0.2px; white-space: nowrap; }
.share { width: 24px; height: 30px; margin-left: auto; }
.star { width: 30px; height: 28px; margin-left: 37px; }
.panel { width: 28px; height: 28px; margin-left: 30px; }
.pill { height: 56px; flex: none; display: flex; align-items: center; margin-top: 6px; border: 3px solid; border-radius: 28px; font-size: 26px; font-weight: 500; white-space: nowrap; }
.paused { width: 176px; margin-left: 22px; padding-left: 3px; gap: 16px; color: #8ab0f5; background: #3d404b; letter-spacing: -0.3px; }
.avatar { width: 44px; height: 44px; border-radius: 50%; background: #3a84cc; color: #fff; font-size: 23px; line-height: 44px; text-align: center; font-weight: 400; }
.relaunch { width: 324px; margin-left: 8px; padding: 0 22px; justify-content: space-between; color: #f0aaa4; background: #473f42; letter-spacing: -0.2px; }

.bookmarks {
  height: 74px;
  flex: none;
  display: flex;
  align-items: center;
  padding: 0 30px;
  border-bottom: 2px solid #5f6062;
  background: #35363a;
  font-size: 24px;
  font-weight: 500;
  letter-spacing: -0.2px;
}
.bookmarks span { white-space: nowrap; }
.gmail { width: 29px; height: 22px; margin-right: 17px; }
.bm-gmail { width: 98px; }
.youtube { width: 32px; height: 22px; margin-right: 15px; }
.bookmarks .bm-youtube { width: 132px; letter-spacing: -0.6px; }
.maps { width: 29px; height: 28px; margin: -4px 15px 0 0; }
.bm-sep { width: 2px; height: 32px; margin-left: auto; background: #5f6164; }
.folder { width: 32px; height: 26px; margin: 0 16px 0 17px; }
.bookmarks .bm-all { width: 161px; letter-spacing: -0.25px; }

/* Page content */
.page { flex: 1; padding: 40px 56px; background: #fff; color: #000; font: 32px/37px "Liberation Serif", "Times New Roman", serif; }
.card { width: 1060px; padding: 100px; border: 30px solid #75147c; background: #d3d3d3; text-align: center; display: flow-root; }
.card h1 { margin: 42.88px 0; font-size: 64px; line-height: 74px; letter-spacing: 0.06px; }
.card p { margin: 32px 0; }

/* Dock */
.dock {
  width: 2807px;
  height: 102px;
  flex: none;
  display: flex;
  align-items: flex-start;
  position: relative;
  margin: 20px 0 0 66px;
  padding-left: 3.5px;
  border: 2px solid #3a3f44;
  border-radius: 32px;
  background: #12191f;
  box-shadow: 0 0 120px rgba(0, 0, 0, .2);
}
.app { width: 85px; height: 98px; flex: none; position: relative; padding: 14px 10px 0; }
.app > svg { width: 65px; height: 65px; }
.app > svg.tall { height: 70px; overflow: visible; }
.app > svg.contacts-icon { width: 68px; }
.app.on::after {
  content: "";
  position: absolute;
  left: 38.5px;
  top: 88px;
  width: 8px;
  height: 8px;
  border-radius: 50%;
  background: #8d939a;
}
.badge {
  position: absolute;
  left: 54px;
  top: 6px;
  width: 30px;
  height: 30px;
  border-radius: 15px;
  background: #e04f40;
  font-size: 20px;
  line-height: 30px;
  text-align: center;
}
.badge.wide { left: 50px; width: 33px; letter-spacing: -1px; }
.cal { display: flex; flex-direction: column; text-align: center; }
.month { height: 20px; border-radius: 15px 15px 0 0; background: #e5594c; font-size: 13.500px; font-weight: 600; line-height: 21px; }
.day { height: 45px; border-radius: 0 0 15px 15px; background: #f8f8f8; color: #222; font-size: 40px; font-weight: 300; line-height: 41px; letter-spacing: -0.5px; }
.dock-sep { width: 2px; height: 74px; margin: 12px 17px 0 18px; background: #43494f; }
.dock-sep.second { margin: 12px 16px 0 19px; }
.mini { width: 86px; height: 98px; }
.tv-label { font-size: 26px; font-weight: 500; fill: #fff; }
.w-label { font-size: 19px; font-weight: 700; fill: #fff; text-anchor: middle; }
.aa-label { font-family: "Liberation Serif", serif; font-size: 35px; fill: #f6eeee; text-anchor: middle; }
```
